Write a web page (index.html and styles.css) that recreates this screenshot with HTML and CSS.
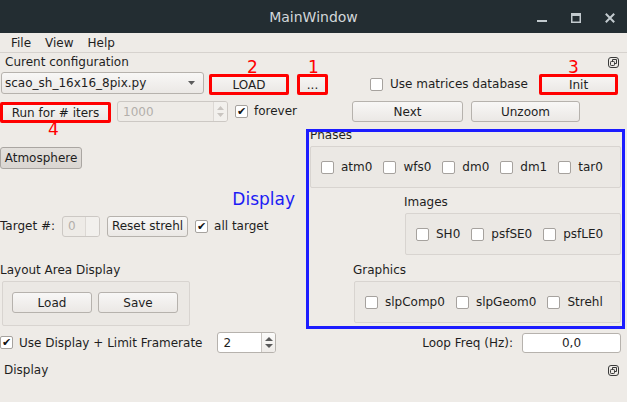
FILE: index.html
```html
<!DOCTYPE html>
<html>
<head>
<meta charset="utf-8">
<title>MainWindow</title>
<link rel="stylesheet" href="styles.css">
</head>
<body>
<div class="window">
  <header class="titlebar">
    <span></span>
    <span class="title">MainWindow</span>
    <span class="wm-controls">
      <svg class="wm" width="10" height="10" viewBox="0 0 10 10"><rect x="0" y="7" width="10" height="2" fill="#c2cace"/></svg>
      <svg class="wm" width="10" height="10" viewBox="0 0 10 10"><rect x="0" y="0" width="10" height="3" fill="#c2cace"/><rect x="0.75" y="0.75" width="8.5" height="8.5" fill="none" stroke="#c2cace" stroke-width="1.5"/></svg>
      <svg class="wm" width="10" height="10" viewBox="0 0 10 10"><path d="M0.8 0.8L9.2 9.2M9.2 0.8L0.8 9.2" stroke="#c2cace" stroke-width="2"/></svg>
    </span>
  </header>

  <nav class="menubar"><span>File</span><span>View</span><span>Help</span></nav>

  <section class="dock">
    <div class="dock-title">
      <span>Curent configuration</span>
      <svg class="float-icon" width="11" height="11" viewBox="0 0 11 11"><rect x="0.5" y="0.5" width="10" height="10" rx="2.5" fill="none" stroke="#3a3a3a"/><rect x="2.5" y="4.5" width="4" height="4" rx="0.8" fill="none" stroke="#3a3a3a"/><path d="M4.5 4.5V2.5H8.5V6.5H6.5" fill="none" stroke="#3a3a3a"/></svg>
    </div>
    <div class="row row1">
      <div class="combo">
        <span class="combo-text">scao_sh_16x16_8pix.py</span>
        <svg width="7" height="4" viewBox="0 0 7 4"><path d="M0 0H7L3.5 4Z" fill="#5c5c5c"/></svg>
      </div>
      <button class="btn mark btn-load">LOAD<span class="tag tag-2">2</span></button>
      <button class="btn mark btn-dots">...<span class="tag tag-1">1</span></button>
      <span class="spacer"></span>
      <label class="cb cb-matrices"><span class="box"></span><span>Use matrices database</span></label>
      <button class="btn mark btn-init">Init<span class="tag tag-3">3</span></button>
    </div>
    <div class="row row2">
      <button class="btn mark btn-run">Run for # iters<span class="tag tag-4">4</span></button>
      <div class="spin disabled spin-iters">
        <span class="spin-val">1000</span>
        <span class="spin-btns">
          <svg width="7" height="4" viewBox="0 0 7 4"><path d="M0 4H7L3.5 0Z" fill="#c9c5c1"/></svg>
          <svg width="7" height="4" viewBox="0 0 7 4"><path d="M0 0H7L3.5 4Z" fill="#c9c5c1"/></svg>
        </span>
      </div>
      <label class="cb cb-forever"><span class="box">✔</span><span>forever</span></label>
      <span class="spacer"></span>
      <button class="btn btn-next">Next</button>
      <button class="btn btn-unzoom">Unzoom</button>
    </div>
  </section>

  <main class="central">
    <div class="left">
      <button class="btn btn-atmos">Atmosphere</button>
      <div class="display-note">Display</div>
      <div class="target-row">
        <span>Target #:</span>
        <div class="spin disabled spin-target">
          <span class="spin-val">0</span>
          <span class="spin-btns blank"></span>
        </div>
        <button class="btn btn-reset">Reset strehl</button>
        <label class="cb cb-all"><span class="box">✔</span><span>all target</span></label>
      </div>
      <div class="layout-label">Layout Area Display</div>
      <div class="group group-layout">
        <button class="btn btn-small">Load</button>
        <button class="btn btn-small">Save</button>
      </div>
    </div>

    <div class="right">
      <div class="glabel glabel-phases">Phases</div>
      <div class="group group-phases">
        <label class="cb"><span class="box"></span><span>atm0</span></label>
        <label class="cb"><span class="box"></span><span>wfs0</span></label>
        <label class="cb"><span class="box"></span><span>dm0</span></label>
        <label class="cb"><span class="box"></span><span>dm1</span></label>
        <label class="cb"><span class="box"></span><span>tar0</span></label>
      </div>
      <div class="glabel glabel-images">Images</div>
      <div class="group group-images">
        <label class="cb"><span class="box"></span><span>SH0</span></label>
        <label class="cb"><span class="box"></span><span>psfSE0</span></label>
        <label class="cb"><span class="box"></span><span>psfLE0</span></label>
      </div>
      <div class="glabel glabel-graphics">Graphics</div>
      <div class="group group-graphics">
        <label class="cb"><span class="box"></span><span>slpComp0</span></label>
        <label class="cb"><span class="box"></span><span>slpGeom0</span></label>
        <label class="cb"><span class="box"></span><span>Strehl</span></label>
      </div>
      <div class="blue-frame"></div>
    </div>
  </main>

  <div class="status-row">
    <label class="cb cb-usedisplay"><span class="box">✔</span><span>Use Display + Limit Framerate</span></label>
    <div class="spin spin-rate">
      <span class="spin-val">2</span>
      <span class="spin-btns">
        <svg width="8" height="4" viewBox="0 0 8 4"><path d="M0 4H8L4 0Z" fill="#5a5a5a"/></svg>
        <svg width="8" height="4" viewBox="0 0 8 4"><path d="M0 0H8L4 4Z" fill="#5a5a5a"/></svg>
      </span>
    </div>
    <span class="spacer"></span>
    <span class="freq-label">Loop Freq (Hz):</span>
    <div class="lineedit">0,0</div>
  </div>

  <section class="dock dock-bottom">
    <div class="dock-title2">
      <span>Display</span>
      <svg class="float-icon" width="11" height="11" viewBox="0 0 11 11"><rect x="0.5" y="0.5" width="10" height="10" rx="2.5" fill="none" stroke="#3a3a3a"/><rect x="2.5" y="4.5" width="4" height="4" rx="0.8" fill="none" stroke="#3a3a3a"/><path d="M4.5 4.5V2.5H8.5V6.5H6.5" fill="none" stroke="#3a3a3a"/></svg>
    </div>
  </section>
</div>
</body>
</html>
```

FILE: styles.css
```css
* { box-sizing: border-box; }
html, body { margin: 0; padding: 0; }
body {
  width: 627px;
  height: 402px;
  overflow: hidden;
  background: #eeebe7;
  font-family: "DejaVu Sans", "Liberation Sans", sans-serif;
  font-size: 12px;
  color: #1e1e1e;
}
.window {
  position: relative;
  width: 627px;
  height: 402px;
  display: flex;
  flex-direction: column;
}

/* title bar */
.titlebar {
  height: 33px;
  flex: none;
  background: #232d32;
  display: grid;
  grid-template-columns: 1fr auto 1fr;
  align-items: center;
}
.title { color: #d2d7da; font-size: 14px; }
.wm-controls {
  justify-self: end;
  display: flex;
  margin-top: 3px;
  margin-right: 12px;
}
.wm { display: block; margin-left: 24px; }

/* menu bar */
.menubar {
  height: 20px;
  flex: none;
  display: flex;
  align-items: center;
  padding-left: 4px;
  border-bottom: 1px solid #d6d2ce;
}
.menubar span { padding: 0 7px; }

/* docks */
.dock-title {
  height: 18px;
  line-height: 18px;
  display: flex;
  justify-content: space-between;
  align-items: center;
  padding-left: 5px;
}
.float-icon { display: block; margin-right: 8px; }

.row { display: flex; align-items: flex-start; }
.row1 { height: 23px; margin-top: 1px; padding-left: 1px; }
.row2 { height: 22px; margin-top: 6px; }
.spacer { flex: 1; }

/* buttons */
.btn {
  position: relative;
  display: flex;
  align-items: center;
  justify-content: center;
  height: 21px;
  padding: 0;
  font: inherit;
  color: inherit;
  border: 1px solid #b6b2ad;
  border-radius: 3px;
  background: linear-gradient(#f8f7f6, #ebe8e5);
  white-space: nowrap;
}
.btn.mark {
  border: 3px solid #ff0000;
  border-radius: 2px;
  background: linear-gradient(#f6f5f3, #ebe8e5);
}
.tag {
  position: absolute;
  color: #ff0000;
  font-size: 17px;
  line-height: 17px;
}
.tag-2 { left: 35px; bottom: calc(100% + 1px); }
.tag-1 { left: 8px; bottom: calc(100% + 1px); }
.tag-3 { left: 26px; bottom: calc(100% + 1px); }
.tag-4 { left: 45px; top: calc(100% + 1px); }

.btn-load { width: 80px; margin-left: 5px; margin-top: 2px; }
.btn-dots { width: 31px; margin-left: 8px; margin-top: 2px; }
.btn-init { width: 79px; margin-left: 11px; margin-right: 9px; margin-top: 2px; }
.btn-run { width: 111px; margin-top: 1px; }
.btn-next { width: 111px; }
.btn-unzoom { width: 109px; margin-left: 8px; margin-right: 47px; }

/* combo */
.combo {
  width: 203px;
  height: 22px;
  display: flex;
  align-items: center;
  justify-content: space-between;
  padding: 0 8px 0 3px;
  border: 1px solid #b6b2ad;
  border-radius: 3px;
  background: linear-gradient(#f8f7f6, #ebe8e5);
}
.combo svg { display: block; }

/* checkboxes */
.cb { display: inline-flex; align-items: center; gap: 6px; white-space: nowrap; }
.box {
  width: 13px;
  height: 13px;
  flex: none;
  display: flex;
  align-items: center;
  justify-content: center;
  background: #fff;
  border: 1px solid #a6a29e;
  border-radius: 2px;
  font-size: 11px;
  line-height: 1;
  color: #111;
}
.cb-matrices { margin-top: 5px; gap: 7px; }
.cb-forever { margin-left: 7px; margin-top: 3px; }

/* spin boxes */
.spin {
  display: flex;
  height: 21px;
  border: 1px solid #b6b2ad;
  border-radius: 3px;
  background: #fff;
  overflow: hidden;
}
.spin-val { flex: 1; display: flex; align-items: center; padding-left: 5px; }
.spin-btns {
  width: 14px;
  flex: none;
  display: flex;
  flex-direction: column;
  align-items: center;
  justify-content: space-around;
  padding: 3px 0;
  border-left: 1px solid #c9c5c1;
  background: linear-gradient(#fbfbfa, #eeebe8);
}
.spin-btns svg { display: block; }
.spin.disabled {
  background: #eeebe7;
  border-color: #ccc8c4;
  color: #b3afab;
}
.spin.disabled .spin-btns { border-left-color: #dcd8d4; background: #f2f0ed; }
.spin-btns.blank { background: #f6f5f3; }
.spin-iters { width: 111px; margin-left: 6px; }
.spin-target { width: 38px; margin-left: 7px; }
.spin-rate { width: 59px; margin-left: 15px; }

/* central */
.central { display: flex; height: 207px; flex: none; }
.left { width: 306px; flex: none; display: flex; flex-direction: column; align-items: flex-start; }
.btn-atmos {
  width: 82px;
  height: 22px;
  margin-top: 24px;
  background: linear-gradient(#e3e0dc, #dad6d2);
  border-color: #aaa6a2;
}
.display-note {
  align-self: stretch;
  margin-top: 22px;
  padding-right: 11px;
  text-align: right;
  font-size: 17px;
  line-height: 17px;
  color: #1c1cf5;
}
.target-row { display: flex; align-items: center; height: 22px; margin-top: 7px; }
.btn-reset { width: 81px; margin-left: 7px; }
.cb-all { margin-left: 7px; }
.layout-label { margin-top: 26px; line-height: 15px; }

.group {
  display: flex;
  align-items: center;
  border: 1px solid #d8d4d0;
  border-radius: 2px;
  background: #ebe8e4;
}
.group-layout {
  width: 188px;
  height: 45px;
  margin-top: 3px;
  margin-left: 2px;
  padding: 10px 0 0 9px;
  align-items: flex-start;
  gap: 6px;
}
.btn-small { width: 80px; }

.right { position: relative; flex: 1; padding-left: 4px; }
.glabel { line-height: 15px; }
.glabel-phases { margin-top: 5px; }
.group .cb { gap: 7px; }
.group-phases { width: 311px; height: 42px; margin-top: 3px; padding-left: 10px; gap: 11px; }
.glabel-images { margin-top: 7px; margin-left: 94px; }
.group-images { width: 216px; height: 42px; margin-top: 3px; margin-left: 95px; padding-left: 10px; gap: 11px; }
.glabel-graphics { margin-top: 8px; margin-left: 43px; }
.group-graphics { width: 267px; height: 42px; margin-top: 3px; margin-left: 44px; padding-left: 10px; gap: 11px; }

.blue-frame {
  position: absolute;
  left: 0;
  top: 6px;
  width: 319px;
  height: 200px;
  border: 3px solid #1c1cff;
  pointer-events: none;
}

/* status row */
.status-row { display: flex; align-items: center; height: 21px; margin-top: 2px; flex: none; }
.lineedit {
  width: 99px;
  height: 20px;
  margin-left: 9px;
  margin-right: 6px;
  display: flex;
  align-items: center;
  justify-content: center;
  background: #fff;
  border: 1px solid #b6b2ad;
  border-radius: 3px;
}

.dock-title2 {
  margin-top: 10px;
  line-height: 15px;
  padding-left: 4px;
  display: flex;
  justify-content: space-between;
  align-items: flex-start;
}
.dock-title2 .float-icon { margin-top: 2px; }
```
